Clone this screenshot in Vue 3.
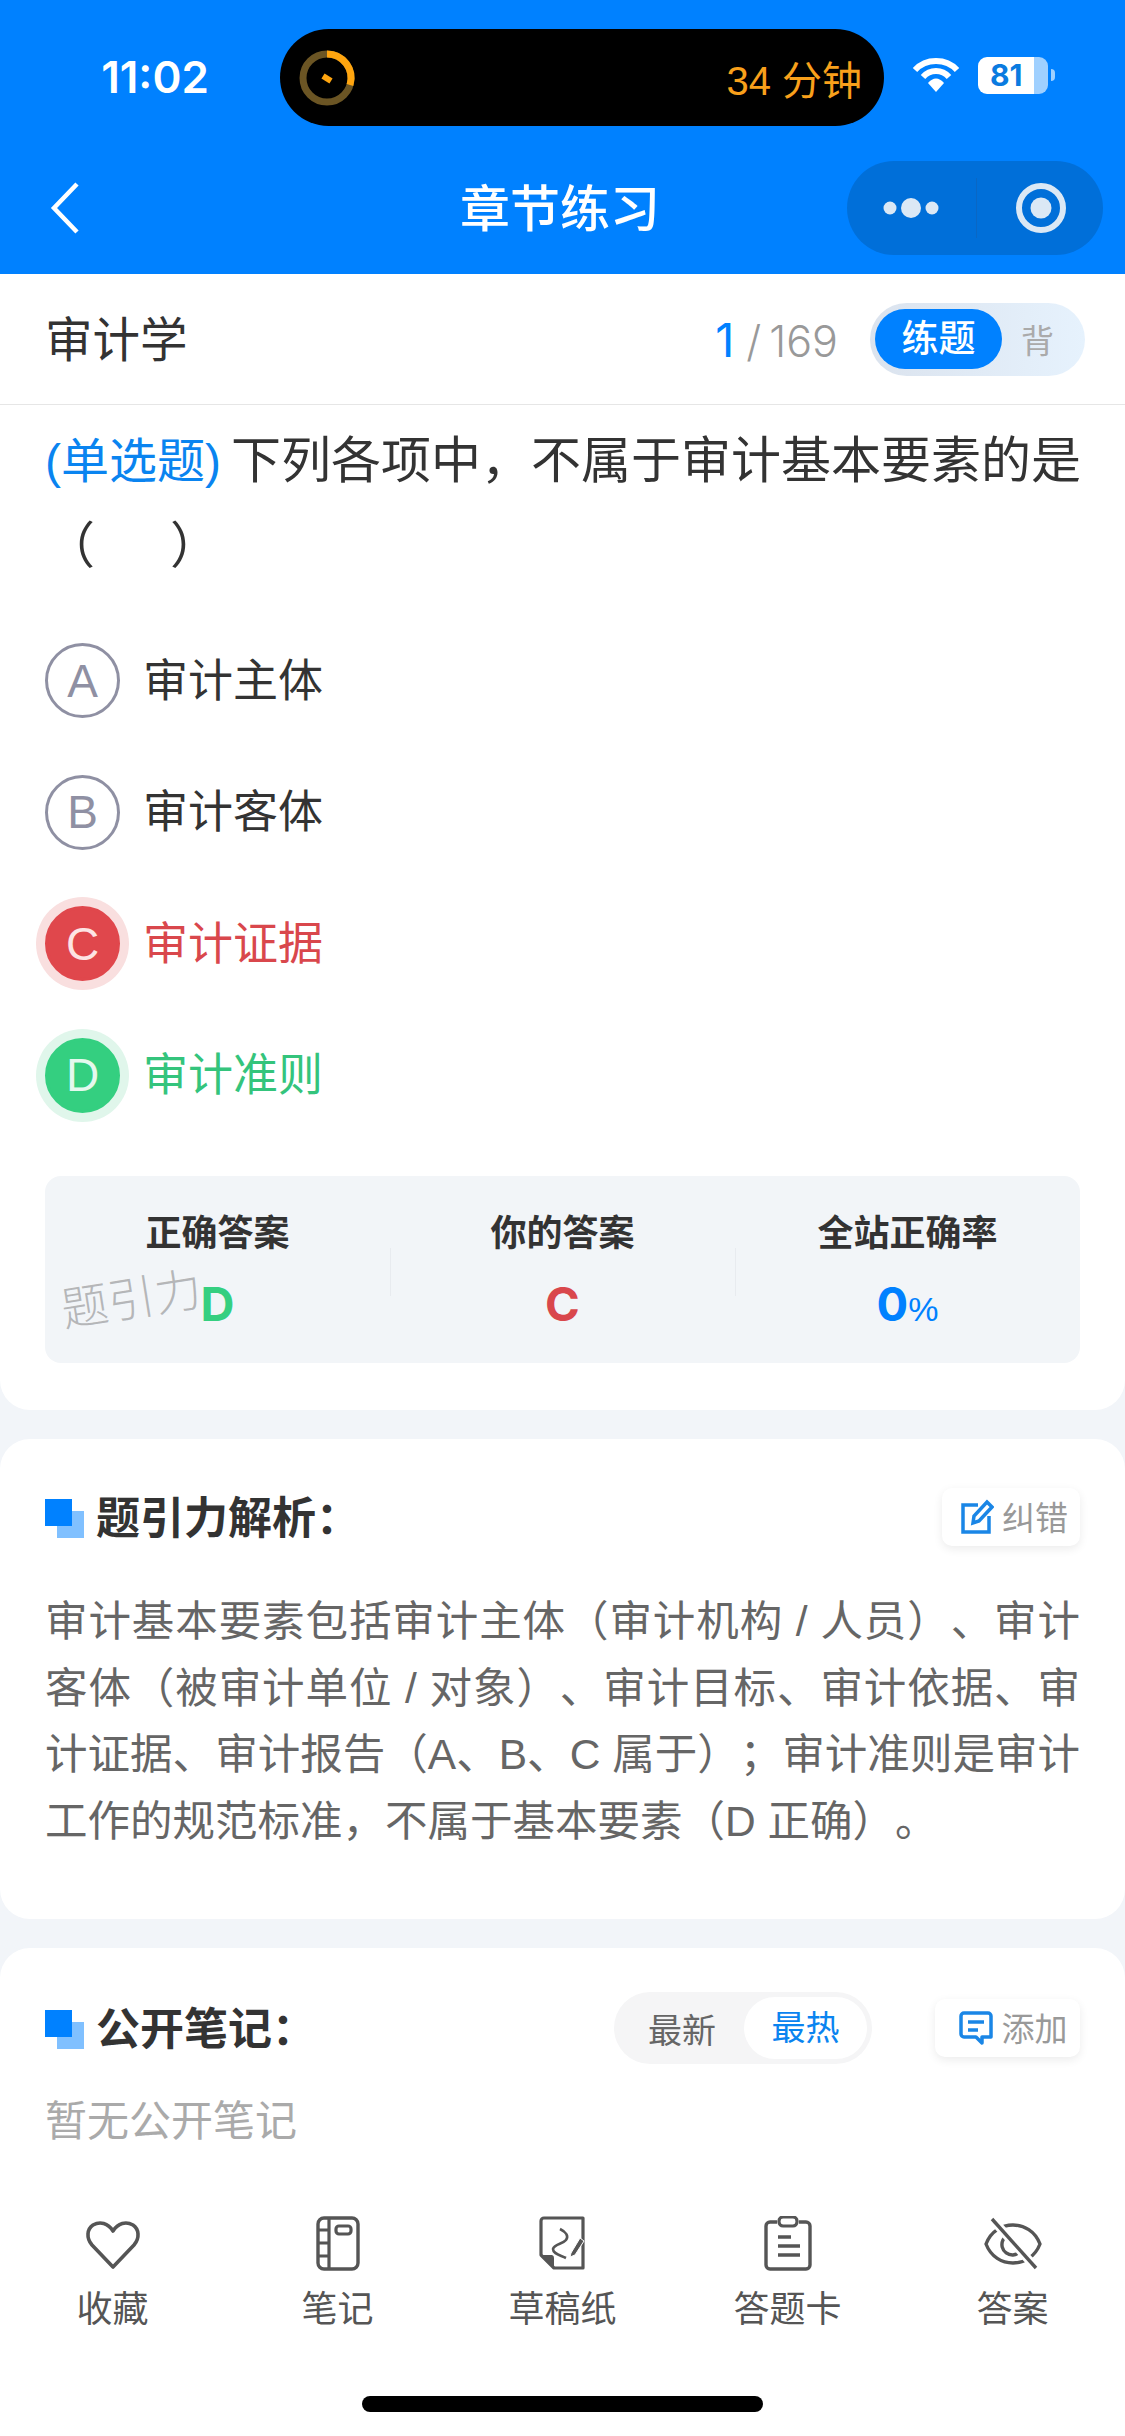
<template>
  <div class="page">
    <header class="top">
      <div class="status">
        <span class="time">11:02</span>
        <div class="island">
          <svg class="ring" width="62" height="62" viewBox="0 0 62 62">
            <circle cx="31" cy="31" r="24" fill="none" stroke="#6b5524" stroke-width="7" />
            <path d="M31 7A24 24 0 0 1 54 38" fill="none" stroke="#ffa50f" stroke-width="7" />
            <path d="M27 29l8 5" stroke="#ffa50f" stroke-width="6" />
          </svg>
          <span class="timer">34 分钟</span>
        </div>
        <svg class="wifi" width="48" height="36" viewBox="0 0 48 36">
          <path d="M3 13C14 1 34 1 45 13" fill="none" stroke="#fff" stroke-width="6" />
          <path d="M11 20C18 12 30 12 37 20" fill="none" stroke="#fff" stroke-width="6" />
          <path d="M16 26C21 20 27 20 32 26L24 35Z" fill="#fff" />
        </svg>
        <div class="battery"><span>81</span></div>
        <i class="nub"></i>
      </div>
      <div class="nav">
        <svg class="back" width="30" height="52" viewBox="0 0 30 52">
          <path d="M27 2L4 26L27 50" fill="none" stroke="#fff" stroke-width="4.5" />
        </svg>
        <h1>章节练习</h1>
        <div class="capsule">
          <svg width="56" height="24" viewBox="0 0 56 24">
            <circle cx="7" cy="12" r="6.5" fill="#dbe8f5" />
            <circle cx="28" cy="12" r="10" fill="#dbe8f5" />
            <circle cx="49" cy="12" r="6.5" fill="#dbe8f5" />
          </svg>
          <i class="capsule-line"></i>
          <svg width="54" height="54" viewBox="0 0 54 54">
            <circle cx="27" cy="27" r="22" fill="none" stroke="#dbe8f5" stroke-width="6" />
            <circle cx="27" cy="27" r="10.5" fill="#dbe8f5" />
          </svg>
        </div>
      </div>
    </header>

    <div class="subject">
      <span class="subject-name">审计学</span>
      <span class="count"><b>1</b> /<em>169</em></span>
      <div class="mode">
        <span class="mode-on">练题</span>
        <span class="mode-off">背</span>
      </div>
    </div>

    <section class="card question">
      <p class="stem"><span class="kind">(单选题)</span>下列各项中，不属于审计基本要素的是</p>
      <p class="stem paren">（<span class="blank"></span>）</p>
      <div class="options">
        <div v-for="opt in options" :key="opt.key" class="option" :class="opt.state">
          <span class="letter">{{ opt.key }}</span>
          <span class="option-text">{{ opt.text }}</span>
        </div>
      </div>
      <div class="result">
        <div class="result-col">
          <span class="result-label">正确答案</span>
          <span class="result-value green">D</span>
        </div>
        <div class="result-col">
          <span class="result-label">你的答案</span>
          <span class="result-value red">C</span>
        </div>
        <div class="result-col">
          <span class="result-label">全站正确率</span>
          <span class="result-value blue">0<small>%</small></span>
        </div>
        <span class="watermark">题引力</span>
      </div>
    </section>

    <section class="card analysis">
      <div class="section-head">
        <i class="mark"></i>
        <h2>题引力解析：</h2>
        <div class="chip">
          <svg width="34" height="36" viewBox="0 0 34 36">
            <path d="M18 6H3V33H29V17" fill="none" stroke="#1a86e6" stroke-width="3.5" />
            <path d="M13 24L14 17L27 3L32 8L19 22Z" fill="none" stroke="#1a86e6" stroke-width="3.5" />
          </svg>
          <span>纠错</span>
        </div>
      </div>
      <div class="analysis-text">
        <p v-for="line in analysis" :key="line">{{ line }}</p>
        <p class="last">工作的规范标准，不属于基本要素（D 正确）。</p>
      </div>
    </section>

    <section class="card notes">
      <div class="section-head">
        <i class="mark"></i>
        <h2>公开笔记：</h2>
        <div class="sort">
          <span>最新</span>
          <span class="sort-on">最热</span>
        </div>
        <div class="chip add">
          <svg width="36" height="36" viewBox="0 0 36 36">
            <path d="M6 3H30A3 3 0 0 1 33 6V27H24V33L18 27H6A3 3 0 0 1 3 24V6A3 3 0 0 1 6 3Z" fill="none" stroke="#1a86e6" stroke-width="3.5" stroke-linejoin="round" />
            <path d="M10 12H26M10 20H20" stroke="#1a86e6" stroke-width="3.5" />
          </svg>
          <span>添加</span>
        </div>
      </div>
      <p class="empty">暂无公开笔记</p>
    </section>

    <footer class="tabs">
      <div class="tab">
        <svg width="60" height="56" viewBox="0 0 60 56">
          <path d="M30 51L9 29C3 22 4 13 10 9C17 5 25 7 30 15C35 7 43 5 50 9C56 13 57 22 51 29Z" fill="none" stroke="#555" stroke-width="3.6" stroke-linejoin="round" />
        </svg>
        <span>收藏</span>
      </div>
      <div class="tab">
        <svg width="60" height="56" viewBox="0 0 60 56">
          <rect x="10" y="2" width="40" height="51" rx="6" fill="none" stroke="#555" stroke-width="3.4" />
          <path d="M21 2V53M10 14H21M10 27H21M10 40H21" fill="none" stroke="#555" stroke-width="3.2" />
          <rect x="28" y="10" width="15" height="8" rx="3" fill="none" stroke="#555" stroke-width="3.2" />
        </svg>
        <span>笔记</span>
      </div>
      <div class="tab">
        <svg width="60" height="56" viewBox="0 0 60 56">
          <path d="M11 2H50V52H21L8 39V5A3 3 0 0 1 11 2Z" fill="none" stroke="#555" stroke-width="3.2" stroke-linejoin="round" />
          <path d="M9 39H19A3 3 0 0 1 21 42V52Z" fill="#555" />
          <path d="M27 13C33 16 36 20 33 24C30 28 21 28 20 33C20 38 27 39 33 42" fill="none" stroke="#555" stroke-width="2.6" />
          <path d="M38 37L47 22L51 25L42 39L37 41Z" fill="#555" stroke="#fff" stroke-width="1" />
        </svg>
        <span>草稿纸</span>
      </div>
      <div class="tab">
        <svg width="60" height="56" viewBox="0 0 60 56">
          <path d="M19 6H12A4 4 0 0 0 8 10V49A4 4 0 0 0 12 53H48A4 4 0 0 0 52 49V10A4 4 0 0 0 48 6H41" fill="none" stroke="#555" stroke-width="3.4" />
          <rect x="21" y="1" width="18" height="9" rx="4" fill="none" stroke="#555" stroke-width="3.2" />
          <path d="M20 21H33M20 30H42M20 39H42" stroke="#555" stroke-width="3.4" />
        </svg>
        <span>答题卡</span>
      </div>
      <div class="tab">
        <svg width="60" height="56" viewBox="0 0 60 56">
          <path d="M3 28C8 15 19 9 30 9C41 9 52 15 57 28C52 41 41 47 30 47C19 47 8 41 3 28Z" fill="none" stroke="#555" stroke-width="3.4" stroke-linejoin="round" />
          <path d="M25 19A10.500 10.500 0 0 0 30 39A10.500 10.500 0 0 0 38 34" fill="none" stroke="#555" stroke-width="3.4" />
          <path d="M9 3L53 52" stroke="#fff" stroke-width="9" />
          <path d="M9 3L53 52" stroke="#555" stroke-width="3.4" />
        </svg>
        <span>答案</span>
      </div>
    </footer>

    <div class="home-bar"><i></i></div>
  </div>
</template>

<script setup>
const options = [
  { key: 'A', text: '审计主体', state: '' },
  { key: 'B', text: '审计客体', state: '' },
  { key: 'C', text: '审计证据', state: 'wrong' },
  { key: 'D', text: '审计准则', state: 'right' }
]

const analysis = [
  '审计基本要素包括审计主体（审计机构 / 人员）、审计',
  '客体（被审计单位 / 对象）、审计目标、审计依据、审',
  '计证据、审计报告（A、B、C 属于）；审计准则是审计'
]
</script>

<style>
html,
body {
  margin: 0;
  background: #f2f5f9;
}
</style>

<style scoped>
.page {
  position: relative;
  width: 1125px;
  height: 2436px;
  overflow: hidden;
  display: flex;
  flex-direction: column;
  background: #f2f5f9;
  font-family: "Liberation Sans", "Noto Sans CJK SC", sans-serif;
  color: #333;
  text-spacing-trim: space-all;
}
h1, h2, p { margin: 0; font-weight: normal; }

.top { height: 274px; background: #0081ff; flex: none; }
.status { height: 155px; display: flex; align-items: flex-start; padding-top: 29px; box-sizing: border-box; }
.time {
  width: 280px;
  height: 97px;
  padding-left: 30px;
  box-sizing: border-box;
  line-height: 97px;
  text-align: center;
  color: #fff;
  font-family: Inter, sans-serif;
  font-size: 44px;
  font-weight: 600;
}
.island {
  width: 604px;
  height: 97px;
  border-radius: 49px;
  background: #000;
  display: flex;
  align-items: center;
  justify-content: space-between;
  padding: 0 22px 0 16px;
  box-sizing: border-box;
}
.timer { color: #f9a01b; font-size: 40px; }
.wifi { margin: 28px 0 0 28px; }
.battery {
  width: 70px;
  height: 37px;
  margin: 28px 0 0 18px;
  border-radius: 9px;
  background: linear-gradient(90deg, #fff 0 80%, #9fd0ff 80%);
  color: #0a7be0;
  font-family: Inter, sans-serif;
  font-size: 30px;
  font-weight: 700;
  line-height: 37px;
  padding-left: 12px;
  box-sizing: border-box;
}
.nub { width: 4px; height: 12px; margin: 40px 0 0 3px; border-radius: 0 4px 4px 0; background: #9fd0ff; }

.nav { position: relative; height: 119px; display: flex; align-items: flex-start; }
.back { margin: 27px 0 0 50px; }
.nav h1 {
  position: absolute;
  left: 0;
  top: 22px;
  width: 560px;
  line-height: 66px;
  margin-left: 280px;
  text-align: center;
  color: #fff;
  font-size: 50px;
  font-weight: 500;
}
.capsule {
  margin: 6px 22px 0 auto;
  width: 256px;
  height: 94px;
  border-radius: 47px;
  background: #006fd9;
  display: flex;
  align-items: center;
  padding-left: 36px;
  box-sizing: border-box;
}
.capsule-line { width: 1px; height: 60px; margin: 0 37px 0 37px; background: #0a67c4; }

.subject {
  height: 132px;
  flex: none;
  display: flex;
  align-items: center;
  padding: 0 40px 0 45px;
  box-sizing: border-box;
  background: #fff;
  border-bottom: 2px solid #e6e6e6;
}
.subject-name { font-size: 47.500px; color: #333; padding-bottom: 5px; }
.count { margin-left: auto; color: #999; font-size: 43px; font-family: Inter, "Liberation Sans", sans-serif; font-weight: 300; }
.count b { color: #0081ff; font-size: 47px; font-weight: 400; }
.count em { font-style: normal; margin-left: 8px; }
.mode {
  width: 215px;
  height: 73px;
  margin-left: 32px;
  border-radius: 37px;
  background: linear-gradient(90deg, #dbe3ee, #e6f2fd);
  display: flex;
  align-items: center;
  padding-left: 5px;
  box-sizing: border-box;
}
.mode-on {
  width: 127px;
  height: 60px;
  border-radius: 30px;
  background: #0081ff;
  color: #fff;
  text-align: center;
  font-size: 37px;
  font-weight: 500;
  line-height: 62px;
}
.mode-off { margin-left: 19px; color: #aaa; font-size: 33px; }

.card { background: #fff; flex: none; box-sizing: border-box; padding-left: 45px; padding-right: 45px; }
.question { height: 1005px; padding-top: 15px; border-radius: 0 0 30px 30px; margin-top: -1px; }
.stem { font-size: 50px; line-height: 82px; color: #333; white-space: nowrap; }
.stem.paren { padding-top: 2px; margin-bottom: -2px; }
.blank { display: inline-block; width: 75px; }
.kind { color: #0a84f0; font-size: 48px; margin-right: 10px; }
.options { margin-top: 30px; }
.option { height: 131.500px; display: flex; align-items: center; }
.letter {
  width: 75px;
  height: 75px;
  border: 3px solid #8f90a3;
  border-radius: 50%;
  box-sizing: border-box;
  display: flex;
  align-items: center;
  justify-content: center;
  color: #8f90a3;
  font-size: 46px;
  flex: none;
}
.option-text { margin-left: 23px; font-size: 45px; padding-bottom: 7px; }
.wrong .letter { background: #e0474c; border-color: #e0474c; color: #fde4e4; box-shadow: 0 0 0 9px #f9dfdf; }
.wrong .option-text { color: #d9474c; }
.right .letter { background: #34cf80; border-color: #34cf80; color: #e4f9ee; box-shadow: 0 0 0 9px #e0f6eb; }
.right .option-text { color: #34c47c; }

.result {
  position: relative;
  height: 187px;
  margin-top: 35px;
  border-radius: 16px;
  background: #f2f5f8;
  display: grid;
  grid-template-columns: repeat(3, 1fr);
  align-items: center;
}
.result-col {
  position: relative;
  display: flex;
  flex-direction: column;
  align-items: center;
  height: 187px;
  padding-top: 34px;
  box-sizing: border-box;
}
.result-col + .result-col::before {
  content: "";
  position: absolute;
  left: 0;
  top: 72px;
  height: 48px;
  width: 1px;
  background: #e8ebef;
}
.result-label { font-size: 36px; font-weight: 700; line-height: 48px; color: #333; }
.result-value { margin-top: 18px; font-size: 47px; font-weight: 700; line-height: 56px; font-family: Inter, "Liberation Sans", sans-serif; }
.result-value small { font-size: 34px; font-weight: 400; font-family: "Liberation Sans", sans-serif; }
.green { color: #35cf80; }
.red { color: #d9474c; }
.blue { color: #0081ff; }
.watermark {
  position: absolute;
  left: 16px;
  top: 92px;
  color: rgba(120, 120, 120, 0.5);
  font-size: 47px;
  font-weight: 300;
  line-height: 64px;
  transform: rotate(-9deg);
}

.analysis { height: 480px; margin-top: 29px; padding-top: 49px; border-radius: 30px; }
.section-head { position: relative; height: 58px; display: flex; align-items: center; }
.mark {
  width: 27px;
  height: 27px;
  margin: 0 24px 10px 0;
  background: #0081ff;
  box-shadow: 12px 12px 0 #80c0ff;
  flex: none;
}
.section-head h2 { font-size: 44px; font-weight: 700; color: #333; padding-bottom: 5px; }
.chip {
  margin-left: auto;
  width: 138px;
  height: 58px;
  border-radius: 10px;
  background: #fff;
  box-shadow: 0 3px 10px rgba(0, 0, 0, 0.08);
  display: flex;
  align-items: center;
  justify-content: center;
  gap: 8px;
  color: #999;
  font-size: 33px;
  padding-left: 6px;
  box-sizing: border-box;
}
.chip span { padding-bottom: 3px; }
.analysis-text { margin-top: 43px; }
.analysis-text p {
  font-size: 42.500px;
  line-height: 66.700px;
  color: #666;
  text-align: justify;
  text-align-last: justify;
  white-space: nowrap;
}
.analysis-text p.last { text-align-last: left; }

.notes { height: 236px; margin-top: 29px; padding-top: 51px; border-radius: 30px 30px 0 0; }
.sort {
  margin-left: auto;
  width: 258px;
  height: 72px;
  border-radius: 36px;
  background: #f5f5f6;
  display: flex;
  align-items: center;
  color: #666;
  font-size: 34px;
  padding-left: 34px;
  box-sizing: border-box;
}
.sort-on {
  width: 123px;
  height: 62px;
  margin-left: 28px;
  border-radius: 31px;
  background: #fff;
  color: #0a84f0;
  text-align: center;
  line-height: 62px;
}
.chip.add { width: 145px; margin-left: 63px; padding-left: 10px; }
.empty { margin-top: 35px; font-size: 42px; line-height: 60px; color: #aaa; }

.tabs {
  flex: 1;
  display: grid;
  grid-template-columns: repeat(5, 225px);
  background: #fff;
  padding-top: 32px;
}
.tab {
  display: flex;
  flex-direction: column;
  align-items: center;
  color: #555;
  font-size: 36px;
}
.tab span { margin-top: 13px; line-height: 50px; }

.home-bar { position: absolute; top: 2396px; left: 0; width: 1125px; display: flex; justify-content: center; }
.home-bar i { width: 401px; height: 16px; border-radius: 8px; background: #000; }
</style>
